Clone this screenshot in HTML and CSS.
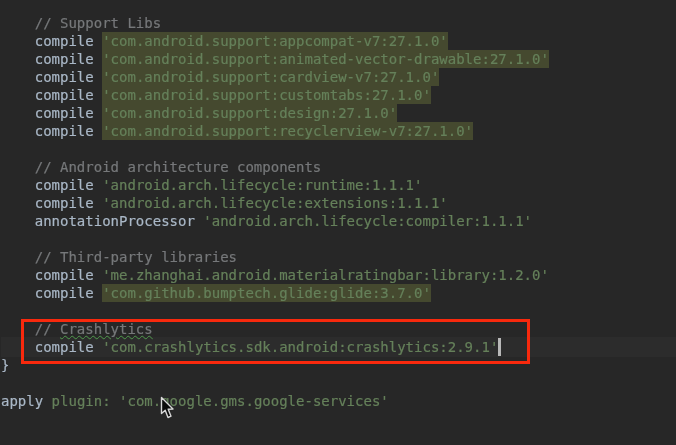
FILE: index.html
```html
<!DOCTYPE html>
<html lang="en">
<head>
<meta charset="utf-8">
<title>build.gradle</title>
<link rel="stylesheet" href="styles.css">
</head>
<body>
<main class="editor">
<div class="code">
<div class="line">    <span class="comment">// Support Libs</span></div>
<div class="line">    <span class="kw">compile</span> <span class="hit">'com.android.support:appcompat-v7:27.1.0'</span></div>
<div class="line">    <span class="kw">compile</span> <span class="hit">'com.android.support:animated-vector-drawable:27.1.0'</span></div>
<div class="line">    <span class="kw">compile</span> <span class="hit">'com.android.support:cardview-v7:27.1.0'</span></div>
<div class="line">    <span class="kw">compile</span> <span class="hit">'com.android.support:customtabs:27.1.0'</span></div>
<div class="line">    <span class="kw">compile</span> <span class="hit">'com.android.support:design:27.1.0'</span></div>
<div class="line">    <span class="kw">compile</span> <span class="hit">'com.android.support:recyclerview-v7:27.1.0'</span></div>
<div class="line"> </div>
<div class="line">    <span class="comment">// Android architecture components</span></div>
<div class="line">    <span class="kw">compile</span> <span class="str">'android.arch.lifecycle:runtime:1.1.1'</span></div>
<div class="line">    <span class="kw">compile</span> <span class="str">'android.arch.lifecycle:extensions:1.1.1'</span></div>
<div class="line">    <span class="kw">annotationProcessor</span> <span class="str">'android.arch.lifecycle:compiler:1.1.1'</span></div>
<div class="line"> </div>
<div class="line">    <span class="comment">// Third-party libraries</span></div>
<div class="line">    <span class="kw">compile</span> <span class="str">'me.zhanghai.android.materialratingbar:library:1.2.0'</span></div>
<div class="line">    <span class="kw">compile</span> <span class="hit">'com.github.bumptech.glide:glide:3.7.0'</span></div>
<div class="line"> </div>
<div class="line">    <span class="comment">// <span class="typo">Crashlytics</span></span></div>
<div class="line current">    <span class="kw">compile</span> <span class="str">'com.crashlytics.sdk.android:crashlytics:2.9.1'</span><span class="caret"></span></div>
<div class="line"><span class="kw">}</span></div>
<div class="line"> </div>
<div class="line"><span class="kw">apply</span> <span class="str">plugin: 'com.google.gms.google-services'</span></div>
</div>
<div class="callout"></div>
<svg class="pointer" width="14" height="24" viewBox="0 0 14 24" aria-hidden="true">
<path d="M1.5 1.5 L1.5 17.5 L5.2 14.2 L8 21.5 L11 20.2 L8.2 13.2 L13 13 Z" fill="#0b0b0b" stroke="#d8d8d8" stroke-width="1.4" stroke-linejoin="round"/>
</svg>
</main>
</body>
</html>
```
FILE: styles.css
```css
html, body {
  margin: 0;
  padding: 0;
  background: #272727;
}

.editor {
  position: relative;
  width: 676px;
  height: 445px;
  overflow: hidden;
  background: #272727;
}

.code {
  padding: 14px 0 0 1px;
  font-family: "DejaVu Sans Mono", monospace;
  font-size: 14px;
  line-height: 18px;
  color: #a9b7c6;
  -webkit-text-stroke: 0.2px;
  filter: blur(0.35px);
}

.line {
  height: 18px;
  white-space: pre;
}

.current {
  background: #2c2c2c;
  box-shadow: 0 1px 0 #2c2c2c, 0 -1px 0 #2c2c2c;
}

.comment {
  color: #76787a;
}

.kw {
  color: #a9b7c6;
}

.str {
  color: #65805a;
}

.hit {
  display: inline-block;
  height: 18px;
  color: #65805a;
  background: #45492f;
}

.typo {
  text-decoration: underline wavy #4f9a4c 1px;
  text-underline-offset: 1px;
}

.caret {
  display: inline-block;
  width: 3px;
  height: 18px;
  vertical-align: top;
  background: #b8b8b8;
}

.callout {
  position: absolute;
  left: 21px;
  top: 319px;
  width: 503px;
  height: 39px;
  border: 3px solid #f8290d;
}

.pointer {
  position: absolute;
  left: 160px;
  top: 396px;
}
```
